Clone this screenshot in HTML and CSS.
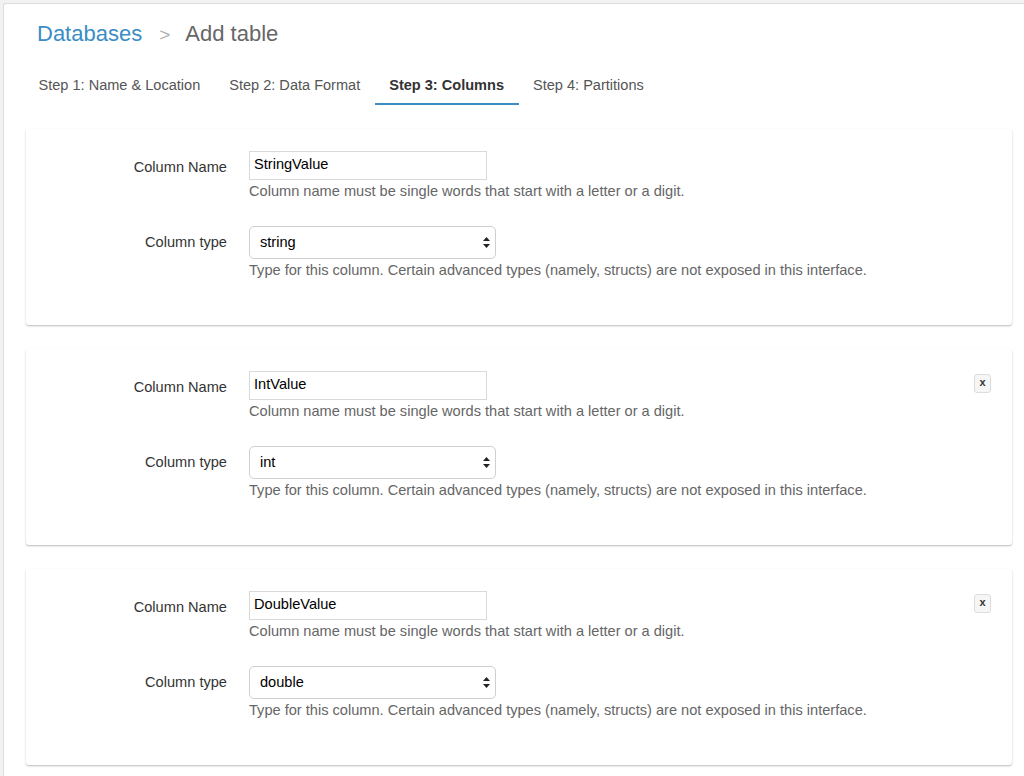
FILE: index.html
```html
<!DOCTYPE html>
<html lang="en">
<head>
    <meta charset="UTF-8">
    <title>Add table</title>
    <link rel="stylesheet" href="styles.css">
</head>
<body>
    <div class="page">
        <h1 class="crumbs">
            <a href="#">Databases</a>
            <span class="sep">&gt;</span>
            <span class="current">Add table</span>
        </h1>

        <nav class="steps">
            <a href="#">Step 1: Name &amp; Location</a>
            <a href="#">Step 2: Data Format</a>
            <a href="#" class="active">Step 3: Columns</a>
            <a href="#">Step 4: Partitions</a>
        </nav>

        <div class="columns">
            <div class="column-card">
                <div class="field">
                    <label>Column Name</label>
                    <div class="control">
                        <input type="text" class="text-input" value="StringValue">
                        <p class="help">Column name must be single words that start with a letter or a digit.</p>
                    </div>
                </div>
                <div class="field">
                    <label>Column type</label>
                    <div class="control">
                        <div class="select-box">
                            <select><option>string</option></select>
                            <svg class="arrows" width="7" height="11" viewBox="0 0 7 11"><path d="M3.5 0 L7 4 L0 4 Z M0 7 L7 7 L3.5 11 Z" fill="#222"/></svg>
                        </div>
                        <p class="help">Type for this column. Certain advanced types (namely, structs) are not exposed in this interface.</p>
                    </div>
                </div>
            </div>

            <div class="column-card">
                <button class="remove">x</button>
                <div class="field">
                    <label>Column Name</label>
                    <div class="control">
                        <input type="text" class="text-input" value="IntValue">
                        <p class="help">Column name must be single words that start with a letter or a digit.</p>
                    </div>
                </div>
                <div class="field">
                    <label>Column type</label>
                    <div class="control">
                        <div class="select-box">
                            <select><option>int</option></select>
                            <svg class="arrows" width="7" height="11" viewBox="0 0 7 11"><path d="M3.5 0 L7 4 L0 4 Z M0 7 L7 7 L3.5 11 Z" fill="#222"/></svg>
                        </div>
                        <p class="help">Type for this column. Certain advanced types (namely, structs) are not exposed in this interface.</p>
                    </div>
                </div>
            </div>

            <div class="column-card">
                <button class="remove">x</button>
                <div class="field">
                    <label>Column Name</label>
                    <div class="control">
                        <input type="text" class="text-input" value="DoubleValue">
                        <p class="help">Column name must be single words that start with a letter or a digit.</p>
                    </div>
                </div>
                <div class="field">
                    <label>Column type</label>
                    <div class="control">
                        <div class="select-box">
                            <select><option>double</option></select>
                            <svg class="arrows" width="7" height="11" viewBox="0 0 7 11"><path d="M3.5 0 L7 4 L0 4 Z M0 7 L7 7 L3.5 11 Z" fill="#222"/></svg>
                        </div>
                        <p class="help">Type for this column. Certain advanced types (namely, structs) are not exposed in this interface.</p>
                    </div>
                </div>
            </div>
        </div>
    </div>
</body>
</html>
```

FILE: styles.css
```css
body {
    margin: 0;
    background-color: #f2f2f2;
    font-family: 'Liberation Sans', Arial, sans-serif;
    font-size: 14.6px;
    color: #333;
}

.page {
    margin: 3px 0 0 3px;
    padding: 0 12px 20px 22px;
    background: white;
    border: 1px solid #dcdcdc;
    border-right: none;
    border-radius: 3px 0 0 0;
    min-height: 800px;
}

.crumbs {
    margin: 17px 0 0 11px;
    font-size: 22px;
    font-weight: normal;
    line-height: 26px;
}

.crumbs a {
    color: #3b8dc5;
    text-decoration: none;
}

.crumbs .sep {
    color: #b0b0b0;
    font-size: 19px;
    margin: 0 10px 0 11px;
}

.crumbs .current {
    color: #666;
}

.steps {
    display: flex;
    margin: 19px 0 0 -2px;
}

.steps a {
    padding: 8px 14.5px 8px;
    line-height: 20px;
    font-size: 14.55px;
    color: #555;
    text-decoration: none;
    border-bottom: 2px solid transparent;
}

.steps a.active {
    color: #333;
    font-weight: bold;
    border-bottom-color: #3b8dc5;
}

.columns {
    display: flex;
    flex-direction: column;
    gap: 24px;
    margin-top: 24px;
}

.column-card {
    position: relative;
    padding: 22px 0 45px;
    border-radius: 3px;
    box-shadow: 0 1px 2px rgba(0, 0, 0, 0.28);
}

.field {
    display: grid;
    grid-template-columns: 201px 1fr;
    column-gap: 22px;
}

.field + .field {
    margin-top: 25px;
}

.field label {
    text-align: right;
    line-height: 29px;
    padding-top: 2px;
    color: #333;
}

.text-input {
    box-sizing: border-box;
    width: 238px;
    height: 29px;
    margin: 0;
    padding: 0 4px 3px;
    border: 1px solid #d9d9d9;
    border-radius: 0;
    font-family: inherit;
    font-size: 14.6px;
    color: #000;
    display: block;
}

.select-box {
    position: relative;
    width: 247px;
}

.select-box select {
    appearance: none;
    -webkit-appearance: none;
    box-sizing: border-box;
    width: 100%;
    height: 33px;
    margin: 0;
    padding: 0 10px 2px;
    border: 1px solid #cfcfcf;
    border-radius: 5px;
    background: white;
    font-family: inherit;
    font-size: 14.6px;
    color: #000;
    display: block;
}

.select-box .arrows {
    position: absolute;
    right: 6px;
    top: 11px;
    pointer-events: none;
}

.help {
    margin: 0;
    padding-top: 1px;
    line-height: 20px;
    color: #666;
}

.remove {
    position: absolute;
    top: 25px;
    right: 21px;
    width: 17px;
    height: 19px;
    padding: 0 0 2px;
    border: 1px solid #ddd;
    border-radius: 3px;
    background: #f6f6f6;
    font-family: inherit;
    font-size: 11px;
    font-weight: bold;
    color: #333;
    line-height: 1;
}
```
